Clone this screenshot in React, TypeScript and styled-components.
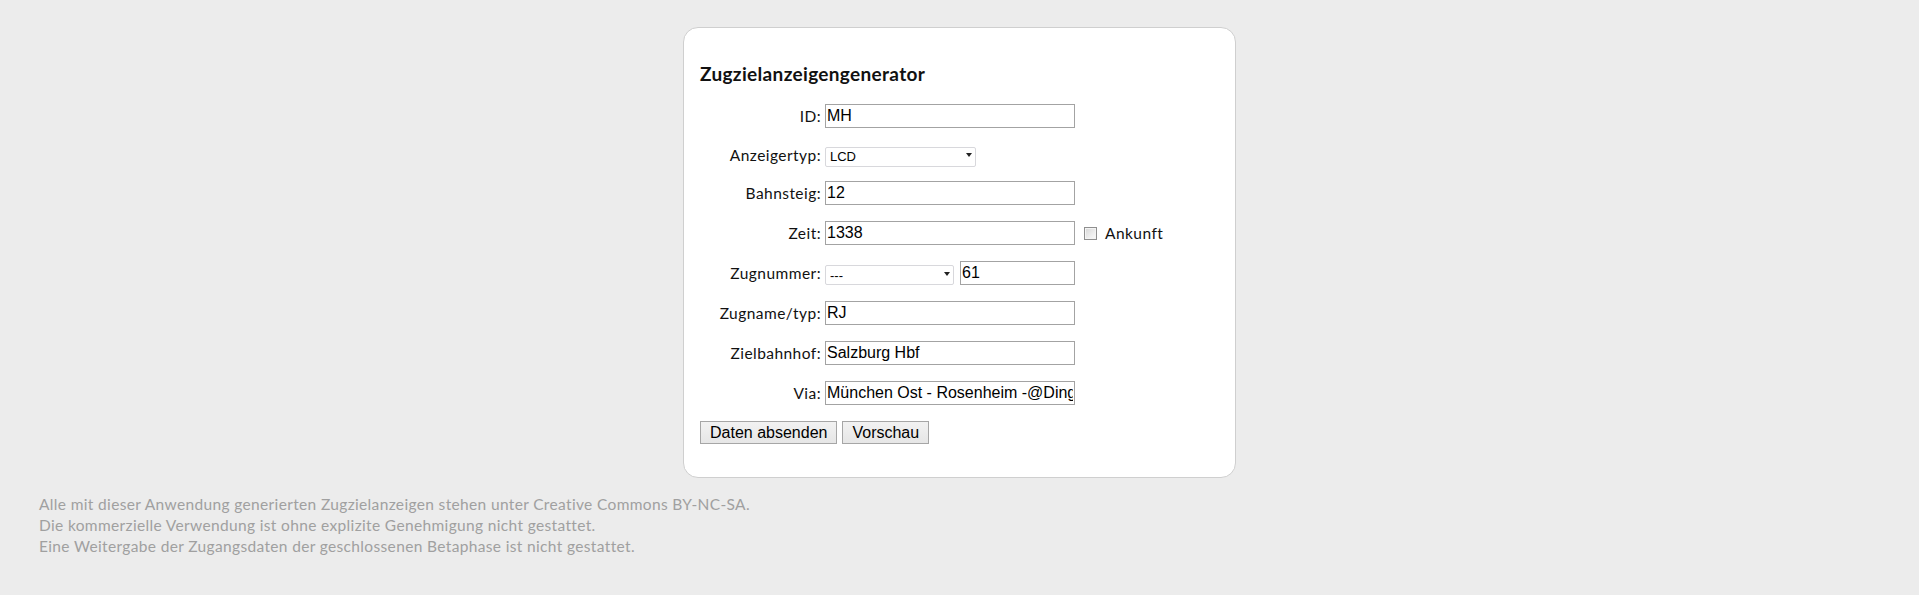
import React, { FC } from 'react'
import styled, { createGlobalStyle } from 'styled-components'

const GlobalStyle = createGlobalStyle`
  html, body {
    margin: 0;
    padding: 0;
    background: #ececec;
  }
  body {
    font-family: 'Lato', 'Noto Sans', sans-serif;
    color: #111111;
  }
`

const Page = styled.div`
  padding-top: 27px;
`

const Card = styled.div`
  box-sizing: border-box;
  width: 553px;
  height: 451px;
  margin: 0 auto;
  padding: 0 16px;
  background: #ffffff;
  border: 1px solid #cfcfcf;
  border-radius: 15px;
`

const Title = styled.h2`
  margin: 34px 0 19px;
  font-size: 19px;
  line-height: 23px;
  font-weight: 700;
  letter-spacing: 0.33px;
  color: #111111;
`

const Form = styled.div`
  display: grid;
  grid-template-columns: 121px auto;
  column-gap: 4px;
  row-gap: 16px;
  align-items: center;
`

const Label = styled.label`
  text-align: right;
  font-size: 15.5px;
  line-height: 18px;
  letter-spacing: 0.45px;
  color: #111111;
`

const Field = styled.div`
  display: flex;
  align-items: center;
  gap: 6px;
`

const TextInput = styled.input<{ $width?: number }>`
  box-sizing: border-box;
  width: ${p => p.$width ?? 250}px;
  height: 24px;
  margin: 0;
  padding: 1px 1px;
  border: 1px solid #a3a3a3;
  border-radius: 0;
  background: #ffffff;
  font-family: 'Liberation Sans', Arial, sans-serif;
  font-size: 16px;
  color: #000000;
  outline: none;
`

const SelectBox = styled.div<{ $width: number }>`
  position: relative;
  width: ${p => p.$width}px;
  height: 20px;
  margin-top: 1px;

  &::after {
    content: '';
    position: absolute;
    right: 4px;
    top: 8px;
    border-left: 3.5px solid transparent;
    border-right: 3.5px solid transparent;
    border-top: 4px solid #222222;
    pointer-events: none;
  }
`

const Select = styled.select`
  box-sizing: border-box;
  appearance: none;
  width: 100%;
  height: 100%;
  margin: 0;
  padding: 0 0 0 4px;
  border: 1px solid #d8d8dc;
  border-radius: 2px;
  background: #ffffff;
  font-family: 'Liberation Sans', Arial, sans-serif;
  font-size: 13px;
  color: #000000;
  outline: none;
`

const CheckLabel = styled.label`
  display: flex;
  align-items: center;
  gap: 8px;
  margin-left: 3px;
  font-size: 15.5px;
  letter-spacing: 0.45px;
  color: #111111;
`

const Check = styled.input`
  appearance: none;
  box-sizing: border-box;
  width: 13px;
  height: 13px;
  margin: 0;
  border: 1px solid #8f8f8f;
  background: linear-gradient(135deg, #d6d6d6 0%, #eeeeee 60%, #fbfbfb 100%);
  box-shadow: inset 0 0 0 1px #f4f4f4;
`

const Buttons = styled.div`
  display: flex;
  gap: 5px;
  margin-top: 16px;
`

const Button = styled.button`
  box-sizing: border-box;
  height: 23px;
  margin: 0;
  padding: 0 9px;
  border: 1px solid #a6a6a6;
  border-radius: 0;
  background: linear-gradient(#f2f2f2, #e6e6e6);
  font-family: 'Liberation Sans', Arial, sans-serif;
  font-size: 16px;
  color: #000000;
`

const Footer = styled.div`
  margin-top: 16px;
  padding-left: 39px;
  font-size: 15.5px;
  line-height: 21px;
  letter-spacing: 0.35px;
  color: #a0a0a0;
`

const App: FC = () => {
  return (
    <>
      <GlobalStyle />
      <Page>
        <Card>
          <Title>Zugzielanzeigengenerator</Title>
          <Form>
            <Label>ID:</Label>
            <Field>
              <TextInput defaultValue="MH" />
            </Field>

            <Label>Anzeigertyp:</Label>
            <Field>
              <SelectBox $width={151}>
                <Select defaultValue="lcd">
                  <option value="lcd">LCD</option>
                  <option value="lcd-old">LCD (alt)</option>
                </Select>
              </SelectBox>
            </Field>

            <Label>Bahnsteig:</Label>
            <Field>
              <TextInput defaultValue="12" />
            </Field>

            <Label>Zeit:</Label>
            <Field>
              <TextInput defaultValue="1338" />
              <CheckLabel>
                <Check type="checkbox" />
                Ankunft
              </CheckLabel>
            </Field>

            <Label>Zugnummer:</Label>
            <Field>
              <SelectBox $width={129}>
                <Select defaultValue="none">
                  <option value="none">---</option>
                  <option value="ic">IC</option>
                  <option value="ec">EC</option>
                </Select>
              </SelectBox>
              <TextInput $width={115} defaultValue="61" />
            </Field>

            <Label>Zugname/typ:</Label>
            <Field>
              <TextInput defaultValue="RJ" />
            </Field>

            <Label>Zielbahnhof:</Label>
            <Field>
              <TextInput defaultValue="Salzburg Hbf" />
            </Field>

            <Label>Via:</Label>
            <Field>
              <TextInput defaultValue="München Ost - Rosenheim -@Dingolfing" />
            </Field>
          </Form>
          <Buttons>
            <Button type="button">Daten absenden</Button>
            <Button type="button">Vorschau</Button>
          </Buttons>
        </Card>
        <Footer>
          Alle mit dieser Anwendung generierten Zugzielanzeigen stehen unter Creative Commons BY-NC-SA.<br />
          Die kommerzielle Verwendung ist ohne explizite Genehmigung nicht gestattet.<br />
          Eine Weitergabe der Zugangsdaten der geschlossenen Betaphase ist nicht gestattet.
        </Footer>
      </Page>
    </>
  )
}

export default App
